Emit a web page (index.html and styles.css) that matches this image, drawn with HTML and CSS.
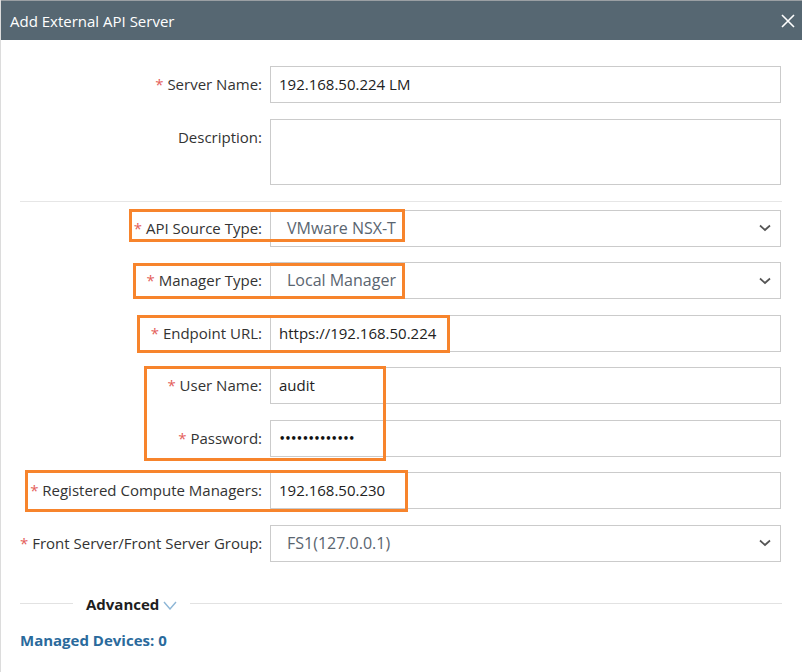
FILE: index.html
```html
<!DOCTYPE html>
<html>
<head>
<meta charset="utf-8">
<link rel="stylesheet" href="styles.css">
</head>
<body>
<div class="dialog">
  <div class="titlebar">
    <span class="title">Add External API Server</span>
    <svg class="close" width="14" height="14" viewBox="0 0 14 14"><path d="M1 1 L13 13 M13 1 L1 13" stroke="#fff" stroke-width="1.6" fill="none"/></svg>
  </div>
  <div class="body">
    <div class="form">
      <label class="lbl"><span class="req">*</span> Server Name:</label>
      <div class="input">192.168.50.224 LM</div>
      <label class="lbl">Description:</label>
      <div class="input textarea"></div>
    </div>
    <div class="sep"></div>
    <div class="form">
      <label class="lbl"><span class="req">*</span> API Source Type:</label>
      <div class="input select"><span>VMware NSX-T</span><svg class="chev" width="12" height="8" viewBox="0 0 12 8"><path d="M1 1.5 L6 6 L11 1.5" stroke="#555" stroke-width="1.7" fill="none"/></svg></div>
      <label class="lbl"><span class="req">*</span> Manager Type:</label>
      <div class="input select"><span>Local Manager</span><svg class="chev" width="12" height="8" viewBox="0 0 12 8"><path d="M1 1.5 L6 6 L11 1.5" stroke="#555" stroke-width="1.7" fill="none"/></svg></div>
      <label class="lbl"><span class="req">*</span> Endpoint URL:</label>
      <div class="input">https://192.168.50.224</div>
      <label class="lbl"><span class="req">*</span> User Name:</label>
      <div class="input">audit</div>
      <label class="lbl"><span class="req">*</span> Password:</label>
      <div class="input pwd">•••••••••••••</div>
      <label class="lbl"><span class="req">*</span> Registered Compute Managers:</label>
      <div class="input">192.168.50.230</div>
      <label class="lbl"><span class="req">*</span> Front Server/Front Server Group:</label>
      <div class="input select"><span>FS1(127.0.0.1)</span><svg class="chev" width="12" height="8" viewBox="0 0 12 8"><path d="M1 1.5 L6 6 L11 1.5" stroke="#555" stroke-width="1.7" fill="none"/></svg></div>
    </div>
    <div class="advanced">
      <div class="line short"></div>
      <span class="adv-text">Advanced</span>
      <svg class="adv-chev" width="14" height="9" viewBox="0 0 14 9"><path d="M1 1 L7 8 L13 1" stroke="#8db6d6" stroke-width="1.4" fill="none"/></svg>
      <div class="line long"></div>
    </div>
    <div class="managed">Managed Devices: 0</div>
  </div>
  <div class="hl hl1"></div>
  <div class="hl hl2"></div>
  <div class="hl hl3"></div>
  <div class="hl hl4"></div>
  <div class="hl hl5"></div>
</div>
</body>
</html>
```
FILE: styles.css
```css
html, body {
  margin: 0;
  padding: 0;
  background: #fff;
}
body {
  font-family: "Open Sans", "Liberation Sans", sans-serif;
  font-size: 15px;
  color: #333;
}
.dialog {
  position: relative;
  width: 802px;
  height: 672px;
  box-sizing: border-box;
  border-left: 1px solid #dcdcdc;
  overflow: hidden;
}
.titlebar {
  height: 40px;
  box-sizing: border-box;
  background: #566772;
  border-top: 1px solid #9a9fa3;
  display: flex;
  align-items: center;
  justify-content: space-between;
  padding: 0 7px 0 9px;
}
.title {
  color: #fff;
  font-size: 15px;
  line-height: 20px;
}
.close {
  display: block;
}
.body {
  padding: 26px 20px 0 19px;
}
.form {
  display: grid;
  grid-template-columns: 242px 511px;
  column-gap: 8px;
  row-gap: 15.5px;
}
.lbl {
  text-align: right;
  line-height: 37px;
  white-space: nowrap;
  color: #333;
}
.req {
  color: #e4605a;
}
.input {
  height: 37px;
  box-sizing: border-box;
  border: 1px solid #cbcbcb;
  padding: 0 8px;
  line-height: 35px;
  color: #222;
  white-space: nowrap;
}
.textarea {
  height: 66px;
}
.pwd {
  font-family: "DejaVu Sans", sans-serif;
  font-size: 10px;
  font-weight: 700;
  letter-spacing: -0.6px;
  color: #111;
}
.select {
  display: flex;
  align-items: center;
  justify-content: space-between;
  padding: 0 9px 0 16px;
  font-size: 16px;
  color: #5a6570;
}
.chev {
  display: block;
}
.sep {
  height: 1px;
  background: #e6e6e6;
  margin: 16px 0 8px 0;
}
.advanced {
  display: flex;
  align-items: center;
  margin-top: 34px;
  height: 16px;
}
.line {
  height: 1px;
  background: #e2e2e2;
}
.line.short {
  width: 53px;
  margin-right: 13px;
}
.line.long {
  flex: 1;
  margin-left: 13px;
}
.adv-text {
  font-weight: 700;
  color: #1e1e1e;
  line-height: 16px;
}
.adv-chev {
  display: block;
  margin-left: 4px;
  margin-top: 3px;
}
.managed {
  margin-top: 18px;
  font-weight: 700;
  color: #2a6a9c;
  line-height: 20px;
}
.hl {
  position: absolute;
  border: 3px solid #f7842c;
  box-sizing: border-box;
  pointer-events: none;
}
.hl1 { left: 128px; top: 209px; width: 276px; height: 33px; }
.hl2 { left: 132px; top: 263px; width: 272px; height: 36px; }
.hl3 { left: 136px; top: 315px; width: 313px; height: 38px; }
.hl4 { left: 143px; top: 366px; width: 242px; height: 95px; }
.hl5 { left: 24px; top: 470px; width: 383px; height: 42px; }
```
